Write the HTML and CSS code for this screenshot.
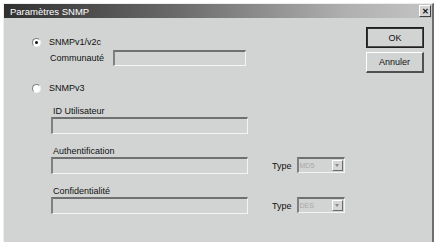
FILE: index.html
```html
<!DOCTYPE html>
<html lang="fr">
<head>
  <meta charset="UTF-8" />
  <title>Paramètres SNMP</title>
  <link rel="stylesheet" href="styles.css">
</head>
<body>
  <div class="dialog">
    <div class="titlebar">
      <span class="title">Paramètres SNMP</span>
      <span class="close">&#x2715;</span>
    </div>

    <div class="content">
      <div class="settings">
        <div class="radio-row first">
          <span class="radio checked"></span>
          <span>SNMPv1/v2c</span>
        </div>
        <div class="community">
          <label>Communauté</label>
          <span class="field short"></span>
        </div>

        <div class="radio-row second">
          <span class="radio"></span>
          <span>SNMPv3</span>
        </div>

        <div class="v3">
          <div class="group">
            <label>ID Utilisateur</label>
            <span class="field"></span>
          </div>
          <div class="group">
            <label>Authentification</label>
            <div class="line">
              <span class="field"></span>
              <label class="type">Type</label>
              <span class="select">MD5<span class="arrow"></span></span>
            </div>
          </div>
          <div class="group">
            <label>Confidentialité</label>
            <div class="line">
              <span class="field"></span>
              <label class="type">Type</label>
              <span class="select">DES<span class="arrow"></span></span>
            </div>
          </div>
        </div>
      </div>

      <div class="buttons">
        <button class="default">OK</button>
        <button>Annuler</button>
      </div>
    </div>
  </div>
</body>
</html>
```

FILE: styles.css
```css
body {
  margin: 0;
  background: #ffffff;
  font-family: "Liberation Sans", Arial, sans-serif;
  font-size: 9px;
  color: #111;
}

.dialog {
  margin: 3px 3px 0 3px;
  width: 428px;
  height: 238px;
  background: #d2d4d3;
  border-left: 1px solid #eeeeee;
  border-top: 1px solid #eeeeee;
  border-right: 2px solid #6e6e6e;
}

.titlebar {
  height: 14px;
  display: flex;
  align-items: center;
  justify-content: space-between;
  padding: 0 1px 0 6px;
  background: linear-gradient(to right, #303030, #6a6a6a 40%, #b0b0b0 80%, #c4c4c4);
}

.title {
  color: #ffffff;
  font-size: 9.5px;
}

.close {
  width: 10px;
  height: 10px;
  display: flex;
  align-items: center;
  justify-content: center;
  font-size: 8px;
  font-weight: bold;
  background: #d4d4d4;
  border-top: 1px solid #ffffff;
  border-left: 1px solid #ffffff;
  border-right: 1px solid #404040;
  border-bottom: 1px solid #404040;
  color: #111;
}

.content {
  display: flex;
  justify-content: space-between;
}

.settings {
  padding-left: 28px;
}

.radio-row {
  display: flex;
  align-items: center;
  gap: 8px;
  height: 12px;
}

.radio-row.first {
  margin-top: 18px;
}

.radio-row.second {
  margin-top: 16px;
}

.radio {
  width: 7px;
  height: 7px;
  border-radius: 50%;
  background: #ffffff;
  border: 1px solid #808080;
  border-right-color: #eeeeee;
  border-bottom-color: #eeeeee;
  display: flex;
  align-items: center;
  justify-content: center;
}

.radio.checked::after {
  content: "";
  width: 3px;
  height: 3px;
  border-radius: 50%;
  background: #111;
}

.community {
  display: flex;
  align-items: center;
  gap: 9px;
  margin-top: 2px;
  padding-left: 18px;
}

.field {
  display: block;
  width: 194px;
  height: 14px;
  background: #d2d4d3;
  border-top: 2px solid #707070;
  border-left: 2px solid #808080;
  border-right: 1px solid #f4f4f4;
  border-bottom: 1px solid #f4f4f4;
}

.field.short {
  width: 130px;
  height: 13px;
}

.v3 {
  padding-left: 19px;
  margin-top: 12px;
}

.group {
  margin-bottom: 12px;
}

.group label {
  display: block;
  padding-left: 2px;
  line-height: 10px;
  margin-bottom: 1px;
}

.line {
  display: flex;
  align-items: center;
}

.group .type {
  padding: 0;
  margin: 0 5px 0 24px;
}

.select {
  position: relative;
  width: 44px;
  height: 13px;
  border-top: 2px solid #707070;
  border-left: 2px solid #808080;
  border-right: 1px solid #f4f4f4;
  border-bottom: 1px solid #f4f4f4;
  color: #a8a8a8;
  font-size: 7px;
  line-height: 13px;
  padding-left: 1px;
  box-sizing: content-box;
  margin-top: -2px;
}

.arrow {
  position: absolute;
  right: 1px;
  top: 1px;
  width: 9px;
  height: 9px;
  background: #d6d6d6;
  border-top: 1px solid #ffffff;
  border-left: 1px solid #ffffff;
  border-right: 1px solid #6a6a6a;
  border-bottom: 1px solid #6a6a6a;
}

.arrow::after {
  content: "";
  position: absolute;
  left: 2px;
  top: 3px;
  border-left: 2.5px solid transparent;
  border-right: 2.5px solid transparent;
  border-top: 3px solid #8a8a8a;
}

.buttons {
  display: flex;
  flex-direction: column;
  gap: 4px;
  padding: 9px 8px 0 0;
}

button {
  width: 58px;
  height: 21px;
  font-family: "Liberation Sans", Arial, sans-serif;
  font-size: 9px;
  color: #111;
  background: #d2d4d3;
  border-top: 1px solid #ffffff;
  border-left: 1px solid #ffffff;
  border-right: 2px solid #505050;
  border-bottom: 2px solid #505050;
  padding: 0;
}

button.default {
  outline: 1px solid #202020;
  outline-offset: -1px;
  border-top: 2px solid #303030;
  border-left: 2px solid #303030;
}
```
